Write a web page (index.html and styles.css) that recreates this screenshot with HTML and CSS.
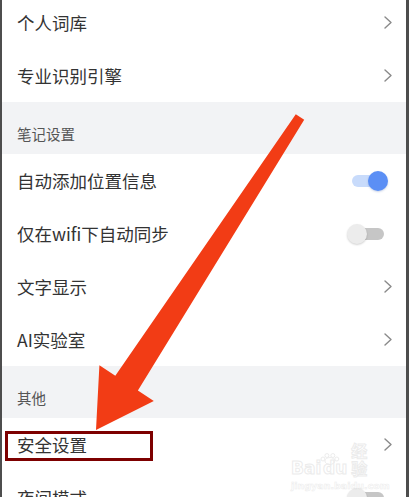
FILE: index.html
```html
<!DOCTYPE html>
<html lang="zh-CN">
<head>
<meta charset="utf-8">
<title>设置</title>
<link rel="stylesheet" href="styles.css">
</head>
<body>
<div class="screen">
  <div class="list">
    <div class="row"><span class="label">个人词库</span><svg class="chev" width="8" height="13" viewBox="0 0 8 13"><polyline points="1,1 7,6.5 1,12"/></svg></div>
    <div class="row"><span class="label">专业识别引擎</span><svg class="chev" width="8" height="13" viewBox="0 0 8 13"><polyline points="1,1 7,6.5 1,12"/></svg></div>
    <div class="section">笔记设置</div>
    <div class="row"><span class="label">自动添加位置信息</span><span class="switch on"><span class="track"></span><span class="knob"></span></span></div>
    <div class="row"><span class="label">仅在wifi下自动同步</span><span class="switch"><span class="track"></span><span class="knob"></span></span></div>
    <div class="row"><span class="label">文字显示</span><svg class="chev" width="8" height="13" viewBox="0 0 8 13"><polyline points="1,1 7,6.5 1,12"/></svg></div>
    <div class="row"><span class="label">AI实验室</span><svg class="chev" width="8" height="13" viewBox="0 0 8 13"><polyline points="1,1 7,6.5 1,12"/></svg></div>
    <div class="section">其他</div>
    <div class="row"><span class="label">安全设置</span><svg class="chev" width="8" height="13" viewBox="0 0 8 13"><polyline points="1,1 7,6.5 1,12"/></svg></div>
    <div class="row"><span class="label">夜间模式</span><span class="switch"><span class="track"></span><span class="knob"></span></span></div>
  </div>
</div>

<div class="watermark">
  <div class="wm-logo"><span>Bai</span><svg class="paw" width="22" height="12" viewBox="0 0 22 12"><ellipse cx="11" cy="8" rx="5" ry="3.5"/><circle cx="4" cy="6" r="2"/><circle cx="8" cy="2.5" r="2"/><circle cx="14" cy="2.5" r="2"/><circle cx="18" cy="6" r="2"/></svg><span>du</span><span class="wm-cn">经验</span></div>
  <div class="wm-url">jingyan.baidu.com</div>
</div>

<div class="highlight"></div>

<svg class="arrow" width="409" height="497" viewBox="0 0 409 497">
  <polygon points="304.2,119.7 137.9,390.5 153.8,400.9 96,430 99.4,365.3 115.3,375.7 295.8,114.3"/>
</svg>
</body>
</html>
```

FILE: styles.css
```css
html, body {
  margin: 0;
  padding: 0;
  background: #ffffff;
}

body {
  position: relative;
  width: 409px;
  height: 497px;
  overflow: hidden;
  font-family: "Noto Sans CJK SC", "Noto Sans", sans-serif;
}

.screen {
  height: 497px;
  border-left: 2px solid #4d4d4d;
  border-right: 3px solid #4d4d4d;
  overflow: hidden;
  background: #ffffff;
}

.list {
  margin-top: -4px;
  display: flex;
  flex-direction: column;
}

.row {
  height: 53px;
  flex: 0 0 53px;
  display: flex;
  align-items: center;
  justify-content: space-between;
  padding: 0 14px 0 15px;
  background: #ffffff;
}

.label {
  font-size: 17.5px;
  color: #333333;
  line-height: 24px;
}

.chev polyline {
  fill: none;
  stroke: #8a8a8a;
  stroke-width: 1.4;
  stroke-linecap: round;
  stroke-linejoin: round;
}

.section {
  height: 52px;
  flex: 0 0 52px;
  box-sizing: border-box;
  padding: 22px 15px 10px;
  background: #f2f3f5;
  font-size: 14.5px;
  line-height: 20px;
  color: #555555;
}

.switch {
  position: relative;
  width: 41px;
  height: 20px;
  margin-right: 4px;
  display: flex;
  align-items: center;
  justify-content: flex-start;
}

.switch .track {
  position: absolute;
  left: 5px;
  right: 4px;
  top: 4px;
  height: 12px;
  border-radius: 6px;
  background: #c6c6c6;
}

.switch .knob {
  position: relative;
  width: 20px;
  height: 20px;
  border-radius: 50%;
  background: #ececec;
  box-shadow: 0 1px 2px rgba(0, 0, 0, 0.18);
}

.switch.on {
  justify-content: flex-end;
}

.switch.on .track {
  background: #c8dbfb;
}

.switch.on .knob {
  background: #5b8ff5;
  box-shadow: 0 1px 2px rgba(40, 80, 160, 0.25);
}

.highlight {
  position: absolute;
  left: 5px;
  top: 431px;
  width: 148px;
  height: 30px;
  box-sizing: border-box;
  border: 3px solid #7d0000;
}

.arrow {
  position: absolute;
  left: 0;
  top: 0;
}

.arrow polygon {
  fill: #f23c15;
}

.watermark {
  position: absolute;
  left: 291px;
  top: 441px;
  width: 92px;
  display: flex;
  flex-direction: column;
  align-items: flex-start;
  color: transparent;
  opacity: 0.35;
}

.wm-logo {
  display: flex;
  align-items: flex-end;
  font-family: "DejaVu Sans", sans-serif;
  font-size: 17px;
  font-weight: bold;
  line-height: 18px;
  -webkit-text-stroke: 1px #c8c8c8;
}

.wm-logo .paw {
  margin: 0 -18px 12px -2px;
  fill: none;
  stroke: #c8c8c8;
  stroke-width: 1;
}

.wm-logo .wm-cn {
  font-family: "Noto Sans CJK SC", sans-serif;
  font-size: 16px;
  margin-left: 4px;
}

.wm-url {
  margin-top: 3px;
  font-family: "DejaVu Sans", sans-serif;
  font-size: 9.5px;
  line-height: 11px;
  font-weight: bold;
  -webkit-text-stroke: 0.6px #cccccc;
}
```
